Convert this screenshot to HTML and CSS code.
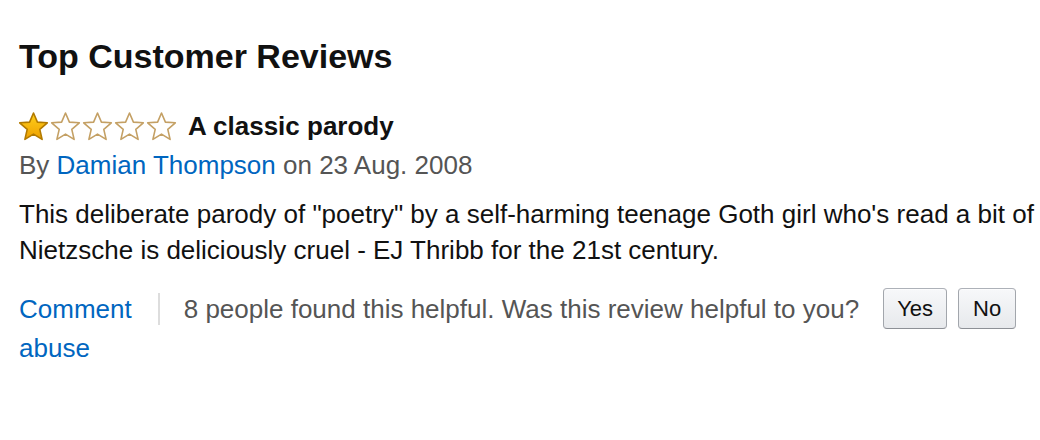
FILE: index.html
```html
<!DOCTYPE html>
<html>
<head>
<meta charset="utf-8">
<link rel="stylesheet" href="styles.css">
</head>
<body>
<div class="reviews">
  <h2 class="heading">Top Customer Reviews</h2>
  <div class="review">
    <div class="title-row">
      <svg class="stars" width="158" height="31" viewBox="0 0 158 31" aria-label="1 out of 5 stars">
        <defs>
          <linearGradient id="gold" x1="0" y1="0" x2="0" y2="1">
            <stop offset="0" stop-color="#ffd01c"/>
            <stop offset="1" stop-color="#eea000"/>
          </linearGradient>
          <path id="star" d="M14.5 0.5 L18.4 9.6 L28.3 10.3 L20.8 16.9 L23.1 26.9 L14.5 21.6 L5.9 26.9 L8.2 16.9 L0.7 10.3 L10.6 9.6 Z"/>
        </defs>
        <use href="#star" x="0" y="1.5" fill="url(#gold)" stroke="#b27a00" stroke-width="1.6" stroke-linejoin="round"/>
        <use href="#star" x="32" y="1.5" fill="#fff" stroke="#c4a064" stroke-width="1.6" stroke-linejoin="round"/>
        <use href="#star" x="64" y="1.5" fill="#fff" stroke="#c4a064" stroke-width="1.6" stroke-linejoin="round"/>
        <use href="#star" x="96" y="1.5" fill="#fff" stroke="#c4a064" stroke-width="1.6" stroke-linejoin="round"/>
        <use href="#star" x="128" y="1.5" fill="#fff" stroke="#c4a064" stroke-width="1.6" stroke-linejoin="round"/>
      </svg>
      <span class="title">A classic parody</span>
    </div>
    <div class="byline">By <a class="link" href="#">Damian Thompson</a> on 23 Aug. 2008</div>
    <p class="body">This deliberate parody of "poetry" by a self-harming teenage Goth girl who's read a bit of Nietzsche is deliciously cruel - EJ Thribb for the 21st century.</p>
    <div class="actions">
      <a class="link" href="#">Comment</a>
      <span class="sep"></span>
      <span class="helpful">8 people found this helpful. Was this review helpful to you?</span>
      <button class="btn btn-yes">Yes</button>
      <button class="btn btn-no">No</button>
    </div>
    <div class="abuse"><a class="link" href="#">abuse</a></div>
  </div>
</div>
</body>
</html>
```

FILE: styles.css
```css
html, body {
  margin: 0;
  padding: 0;
  background: #fff;
}
body {
  font-family: "Liberation Sans", Arial, sans-serif;
  color: #111;
}
.reviews {
  padding: 32px 0 0 19px;
}
.heading {
  margin: 0;
  font-size: 34px;
  line-height: 48px;
  font-weight: 700;
  color: #111;
}
.review {
  margin-top: 27px;
}
.title-row {
  display: flex;
  align-items: center;
  height: 38px;
}
.stars {
  display: block;
  margin-right: 11px;
}
.title {
  font-size: 26px;
  font-weight: 700;
  line-height: 38px;
}
.byline {
  margin-top: 1px;
  font-size: 26px;
  line-height: 38px;
  color: #555;
}
.link {
  color: #0066c0;
  text-decoration: none;
}
.body {
  margin: 12px 0 0;
  font-size: 26px;
  line-height: 36px;
  color: #111;
}
.actions {
  display: flex;
  align-items: center;
  margin-top: 20px;
  font-size: 26px;
  line-height: 40px;
}
.sep {
  width: 2px;
  height: 32px;
  background: #ddd;
  margin: 0 24px 0 26px;
}
.helpful {
  color: #555;
  margin-right: 24px;
}
.btn {
  font-family: "Liberation Sans", Arial, sans-serif;
  font-size: 22px;
  color: #111;
  height: 41px;
  padding: 0;
  border: 1px solid;
  border-color: #adb1b8 #a2a6ac #8d9096;
  border-radius: 4px;
  background: linear-gradient(to bottom, #f7f8fa, #e7e9ec);
  box-shadow: inset 0 1px 0 rgba(255,255,255,0.6);
  margin-right: 11px;
}
.btn-yes {
  width: 64px;
}
.btn-no {
  width: 58px;
}
.abuse {
  font-size: 26px;
  line-height: 38px;
}
```
